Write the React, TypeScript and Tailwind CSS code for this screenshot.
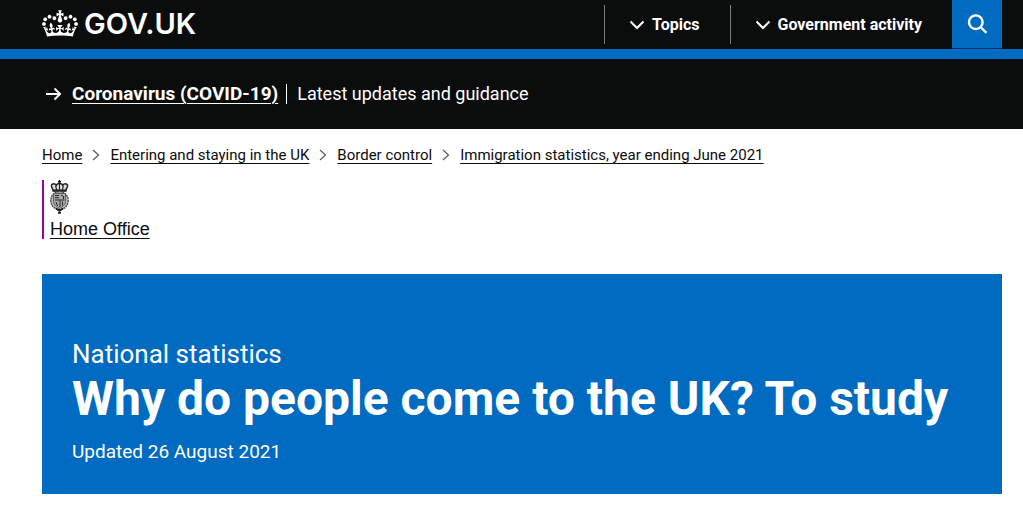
import { ReactNode } from 'react'

const CROWN =
  'M25 30.2c3.5 1.5 7.7-.2 9.1-3.7 1.5-3.6-.2-7.8-3.9-9.2-3.6-1.4-7.6.3-9.1 3.9-1.4 3.5.3 7.5 3.9 9zM9 39.5c3.6 1.5 7.8-.2 9.2-3.7 1.5-3.6-.2-7.8-3.9-9.1-3.6-1.5-7.6.2-9.1 3.8-1.4 3.5.3 7.5 3.8 9zM4.4 57.2c3.5 1.5 7.7-.2 9.1-3.8 1.5-3.6-.2-7.7-3.9-9.1-3.5-1.5-7.6.3-9.1 3.8-1.4 3.5.3 7.6 3.9 9.1zm38.3-21.4c3.5 1.5 7.7-.2 9.1-3.8 1.5-3.6-.2-7.7-3.9-9.1-3.6-1.5-7.6.3-9.1 3.8-1.3 3.6.4 7.7 3.9 9.1zm64.4-5.6c-3.6 1.5-7.8-.2-9.1-3.7-1.5-3.6.2-7.8 3.8-9.2 3.6-1.4 7.7.3 9.2 3.9 1.3 3.5-.4 7.5-3.9 9zm15.9 9.3c-3.6 1.5-7.7-.2-9.1-3.7-1.5-3.6.2-7.8 3.7-9.1 3.6-1.5 7.7.2 9.2 3.8 1.5 3.5-.3 7.5-3.8 9zm4.7 17.7c-3.6 1.5-7.8-.2-9.2-3.8-1.5-3.6.2-7.7 3.9-9.1 3.6-1.5 7.7.3 9.2 3.8 1.3 3.5-.4 7.6-3.9 9.1zM89.3 35.8c-3.6 1.5-7.8-.2-9.2-3.8-1.4-3.6.2-7.7 3.9-9.1 3.6-1.5 7.7.3 9.2 3.8 1.4 3.6-.3 7.7-3.9 9.1zM69.7 17.7l8.9 4.7V9.3l-8.9 2.8c-.2-.3-.5-.6-.9-.9L72.4 0H59.6l3.5 11.2c-.3.3-.6.5-.9.9l-8.8-2.8v13.1l8.8-4.7c.3.3.6.7.9.9l-5 15.4v.1c-.2.8-.4 1.6-.4 2.4 0 4.1 3.1 7.5 7 8.1h.2c.3 0 .7.1 1 .1.4 0 .7 0 1-.1h.2c4-.6 7.1-4.1 7.1-8.1 0-.8-.1-1.7-.4-2.4V34l-5.1-15.4c.4-.2.7-.6 1-.9zM66 92.8c16.9 0 32.8 1.1 47.1 3.2 4-16.9 8.9-26.7 14-33.5l-9.6-3.4c1 4.9 1.1 7.2 0 10.2-1.5-1.4-3-4.3-4.2-8.7L108.6 76c2.8-2 5-3.2 7.5-3.3-4.4 9.4-10 11.9-13.6 11.2-4.3-.8-6.3-4.6-5.6-7.9 1-4.7 5.7-5.9 8-.5 4.3-8.7-3-11.4-7.6-8.8 7.1-7.2 7.9-13.5 2.1-21.1-8 6.1-8.1 12.3-4.5 20.8-4.7-5.4-12.1-2.5-9.5 6.2 3.4-5.2 7.9-2 7.2 3.1-.6 4.3-6.4 7.8-13.5 7.2-10.3-.9-10.9-8-11.2-13.8 2.5-.5 7.1 1.8 11 7.3L80.2 60c-4.1 4.4-8 5.3-12.3 5.4 1.4-4.4 8-11.6 8-11.6H55.5s6.4 7.2 7.9 11.6c-4.2-.1-8-1-12.3-5.4l1.4 16.4c3.9-5.5 8.5-7.7 10.9-7.3-.3 5.8-.9 12.8-11.1 13.8-7.2.6-12.9-2.9-13.5-7.2-.7-5 3.8-8.3 7.1-3.1 2.7-8.7-4.6-11.6-9.4-6.2 3.7-8.5 3.6-14.7-4.6-20.8-5.8 7.6-5 13.9 2.2 21.1-4.7-2.6-11.9.1-7.7 8.8 2.3-5.5 7.1-4.2 8.1.5.7 3.3-1.3 7.1-5.7 7.9-3.5.7-9-1.8-13.5-11.2 2.5.1 4.7 1.3 7.5 3.3l-4.7-15.4c-1.2 4.4-2.7 7.2-4.3 8.7-1.1-3-.9-5.3 0-10.2l-9.5 3.4c5 6.9 9.9 16.7 14 33.5 14.8-2.1 30.8-3.2 47.7-3.2z'

const crumbs = ['Home', 'Entering and staying in the UK', 'Border control', 'Immigration statistics, year ending June 2021']

function Crest() {
  return (
    <svg width="20" height="34" viewBox="0 0 20 34" fill="none" stroke="#222" aria-hidden="true">
      {/* crown */}
      <path d="M9.500 0v4M8 1.700h3" strokeWidth="1.600" />
      <path d="M3.300 10.500 1.600 6.800c-1-3 2.600-4 4.800-1.700.8-2 5.400-2 6.200 0 2.200-2.300 5.800-1.300 4.800 1.700l-1.700 3.700z" fill="#ddd" strokeWidth="1.500" />
      <path d="M9.500 4v6M5.500 5.500l1.200 4.500M13.500 5.500 12.300 10" strokeWidth="1.100" />
      <path d="M2.500 10.700h14" strokeWidth="2.200" />
      {/* garter and shield */}
      <ellipse cx="9.500" cy="20.500" rx="8.700" ry="9" fill="#bbb" stroke="#444" strokeWidth="1.300" strokeDasharray="2 .6" />
      <path d="M3.500 13.500h12v8c0 3-3 5.500-6 6.800-3-1.300-6-3.800-6-6.800z" fill="#aaa" stroke="#555" strokeWidth=".9" />
      <path d="M10 20.500V27M5 20h9.500M5 15.500h4M5 17.700h4M11 15l2.500 1.500v2.500M6 22l1.500 4M12.500 21.500v4" strokeWidth="1" />
      {/* buckle */}
      <path d="m6 28.500 3.500 2.300 3.500-2.300M9.500 29v4.500M8 32.800h3" strokeWidth="1.800" />
    </svg>
  )
}

function MenuButton({ children }: { children: ReactNode }) {
  return (
    <button type="button" className="flex h-[39px] items-center gap-[7px] border-l border-[#7b7c7d] pr-[30px] pl-6 text-base font-bold text-white">
      <svg width="16" height="10" viewBox="0 0 16 10" fill="none" stroke="currentColor" strokeWidth="2" aria-hidden="true">
        <path d="m1.500 1.500 6.500 6.500 6.500-6.500" />
      </svg>
      {children}
    </button>
  )
}

export default function App() {
  return (
    <div className="min-h-screen bg-white font-[Roboto,sans-serif] text-[#0b0c0c]">
      <header className="border-b-10 border-[#006bc0] bg-[#0b0c0c] text-white">
        <div className="mr-[21px] ml-[42px] flex h-[49px] items-start justify-between">
          <a href="#" className="flex h-[47px] items-center gap-[6px]">
            <svg width="36" height="27" viewBox="0 0 132 97" fill="currentColor" aria-hidden="true">
              <path d={CROWN} />
            </svg>
            <span className="font-[Inter,sans-serif] text-[29px] leading-8 font-semibold">GOV.UK</span>
          </a>
          <nav className="flex items-center">
            <MenuButton>Topics</MenuButton>
            <MenuButton>Government activity</MenuButton>
            <button type="button" aria-label="Search GOV.UK" className="flex h-[49px] w-[50px] items-center justify-center border-b border-[#003078] bg-[#006bc0]">
              <svg width="20" height="20" viewBox="0 0 20 20" fill="none" stroke="currentColor" strokeWidth="2.400" aria-hidden="true">
                <circle cx="8.800" cy="8.200" r="6.800" />
                <path d="m13.500 13 6 6" />
              </svg>
            </button>
          </nav>
        </div>
      </header>

      <section aria-label="Coronavirus" className="flex h-[70px] items-center bg-[#0b0c0c] pl-[46px] leading-5 text-white">
        <svg width="16" height="14" viewBox="0 0 16 14" fill="none" stroke="currentColor" strokeWidth="2" aria-hidden="true">
          <path d="M0 7h14M8.500 1.500 14 7l-5.500 5.500" />
        </svg>
        <a href="#" className="ml-[10px] text-[19px] leading-5 font-bold underline decoration-1 underline-offset-3">Coronavirus (COVID-19)</a>
        <span className="ml-2 border-l border-white pl-[10px] text-lg leading-5">Latest updates and guidance</span>
      </section>

      <main className="mr-[21px] ml-[42px]">
        <nav aria-label="Breadcrumb" className="pt-4">
          <ol className="flex items-center text-[15px] leading-5">
            {crumbs.map((crumb, i) => (
              <li key={crumb} className="flex items-center">
                {i > 0 && (
                  <svg className="mx-[10px]" width="8" height="12" viewBox="0 0 8 12" fill="none" stroke="#505a5f" aria-hidden="true">
                    <path d="m1 1 5.500 5L1 11" strokeWidth="1.200" />
                  </svg>
                )}
                <a href="#" className="underline decoration-1 underline-offset-3">{crumb}</a>
              </li>
            ))}
          </ol>
        </nav>

        <div className="mt-[15px] border-l-2 border-[#9c00b0] pl-[6px]">
          <Crest />
          <a href="#" className="mt-[5px] block w-fit font-['Liberation_Sans',sans-serif] text-lg leading-5 underline decoration-1 underline-offset-3">Home Office</a>
        </div>

        <div className="mt-[35px] bg-[#006bc0] px-[30px] pt-16 pb-[30px] text-white">
          <p className="text-[26px] leading-8">National statistics</p>
          <h1 className="text-5xl leading-[58px] font-bold">Why do people come to the UK? To study</h1>
          <p className="mt-3 text-[19px] leading-6">Updated 26 August 2021</p>
        </div>
      </main>
    </div>
  )
}
